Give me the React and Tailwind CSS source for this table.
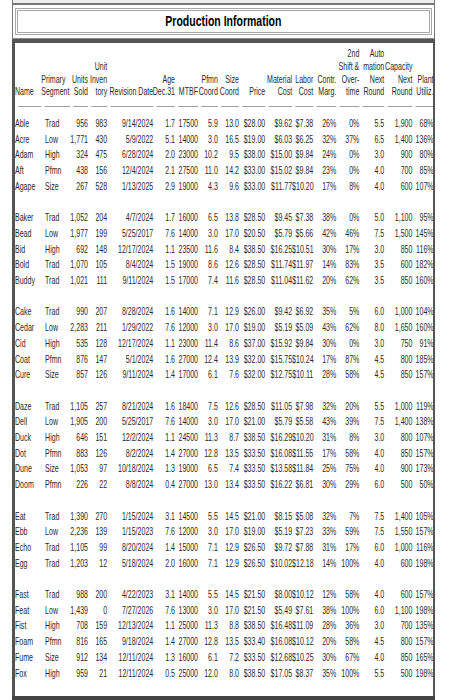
import React from "react";

// widths are in unscaled px; the whole grid is squeezed horizontally like the reference
const cols = [
  { key: "name", w: 41, head: ["Name"], left: true },
  { key: "seg", w: 45, head: ["Primary", "Segment"], left: true },
  { key: "sold", w: 28, head: ["Units", "Sold"] },
  { key: "inv", w: 30, head: ["Unit", "Inven", "tory"] },
  { key: "rev", w: 72, head: ["Revision Date"] },
  { key: "age", w: 34, head: ["Age", "Dec.31"] },
  { key: "mtbf", w: 36, head: ["MTBF"] },
  { key: "pfmn", w: 31, head: ["Pfmn", "Coord"] },
  { key: "size", w: 33, head: ["Size", "Coord"] },
  { key: "price", w: 41, head: ["Price"] },
  { key: "mat", w: 42, head: ["Material", "Cost"] },
  { key: "labor", w: 33, head: ["Labor", "Cost"] },
  { key: "contr", w: 36, head: ["Contr.", "Marg."] },
  { key: "ot", w: 36, head: ["2nd", "Shift &", "Over-", "time"] },
  { key: "auto", w: 39, head: ["Auto", "mation", "Next", "Round"] },
  { key: "cap", w: 44, head: ["Capacity", "Next", "Round"] },
  { key: "plant", w: 33, head: ["Plant", "Utiliz."] },
];

const groups = [
  [
    "Able Trad 956 983 9/14/2024 1.7 17500 5.9 13.0 $28.00 $9.62 $7.38 26% 0% 5.5 1,900 68%",
    "Acre Low 1,771 430 5/9/2022 5.1 14000 3.0 16.5 $19.00 $6.03 $6.25 32% 37% 6.5 1,400 136%",
    "Adam High 324 475 6/28/2024 2.0 23000 10.2 9.5 $38.00 $15.00 $9.84 24% 0% 3.0 900 80%",
    "Aft Pfmn 438 156 12/4/2024 2.1 27500 11.0 14.2 $33.00 $15.02 $9.84 23% 0% 4.0 700 85%",
    "Agape Size 267 528 1/13/2025 2.9 19000 4.3 9.6 $33.00 $11.77 $10.20 17% 8% 4.0 600 107%",
  ],
  [
    "Baker Trad 1,052 204 4/7/2024 1.7 16000 6.5 13.8 $28.50 $9.45 $7.38 38% 0% 5.0 1,100 95%",
    "Bead Low 1,977 199 5/25/2017 7.6 14000 3.0 17.0 $20.50 $5.79 $5.66 42% 46% 7.5 1,500 145%",
    "Bid High 692 148 12/17/2024 1.1 23500 11.6 8.4 $38.50 $16.25 $10.51 30% 17% 3.0 850 116%",
    "Bold Trad 1,070 105 8/4/2024 1.5 19000 8.6 12.6 $28.50 $11.74 $11.97 14% 83% 3.5 600 182%",
    "Buddy Trad 1,021 111 9/11/2024 1.5 17000 7.4 11.6 $28.50 $11.04 $11.62 20% 62% 3.5 850 160%",
  ],
  [
    "Cake Trad 990 207 8/28/2024 1.6 14000 7.1 12.9 $26.00 $9.42 $6.92 35% 5% 6.0 1,000 104%",
    "Cedar Low 2,283 211 1/29/2022 7.6 12000 3.0 17.0 $19.00 $5.19 $5.09 43% 62% 8.0 1,650 160%",
    "Cid High 535 128 12/17/2024 1.1 23000 11.4 8.6 $37.00 $15.92 $9.84 30% 0% 3.0 750 91%",
    "Coat Pfmn 876 147 5/1/2024 1.6 27000 12.4 13.9 $32.00 $15.75 $10.24 17% 87% 4.5 800 185%",
    "Cure Size 857 126 9/11/2024 1.4 17000 6.1 7.6 $32.00 $12.75 $10.11 28% 58% 4.5 850 157%",
  ],
  [
    "Daze Trad 1,105 257 8/21/2024 1.6 18400 7.5 12.6 $28.50 $11.05 $7.98 32% 20% 5.5 1,000 119%",
    "Dell Low 1,905 200 5/25/2017 7.6 14000 3.0 17.0 $21.00 $5.79 $5.58 43% 39% 7.5 1,400 138%",
    "Duck High 646 151 12/2/2024 1.1 24500 11.3 8.7 $38.50 $16.29 $10.20 31% 8% 3.0 800 107%",
    "Dot Pfmn 883 126 8/2/2024 1.4 27000 12.8 13.5 $33.50 $16.08 $11.55 17% 58% 4.0 850 157%",
    "Dune Size 1,053 97 10/18/2024 1.3 19000 6.5 7.4 $33.50 $13.58 $11.84 25% 75% 4.0 900 173%",
    "Doom Pfmn 226 22 8/8/2024 0.4 27000 13.0 13.4 $33.50 $16.22 $6.81 30% 29% 6.0 500 50%",
  ],
  [
    "Eat Trad 1,390 270 1/15/2024 3.1 14500 5.5 14.5 $21.00 $8.15 $5.08 32% 7% 7.5 1,400 105%",
    "Ebb Low 2,236 139 1/15/2023 7.6 12000 3.0 17.0 $19.00 $5.19 $7.23 33% 59% 7.5 1,550 157%",
    "Echo Trad 1,105 99 8/20/2024 1.4 15000 7.1 12.9 $26.50 $9.72 $7.88 31% 17% 6.0 1,000 116%",
    "Egg Trad 1,203 12 5/18/2024 2.0 16000 7.1 12.9 $26.50 $10.02 $12.18 14% 100% 4.0 600 198%",
  ],
  [
    "Fast Trad 988 200 4/22/2023 3.1 14000 5.5 14.5 $21.50 $8.00 $10.12 12% 58% 4.0 600 157%",
    "Feat Low 1,439 0 7/27/2026 7.6 13000 3.0 17.0 $21.50 $5.49 $7.61 38% 100% 6.0 1,100 198%",
    "Fist High 708 159 12/13/2024 1.1 25000 11.3 8.8 $38.50 $16.48 $11.09 28% 36% 3.0 700 135%",
    "Foam Pfmn 816 165 9/18/2024 1.4 27000 12.8 13.5 $33.40 $16.08 $10.12 20% 58% 4.5 800 157%",
    "Fume Size 912 134 12/11/2024 1.3 16000 6.1 7.2 $33.50 $12.68 $10.25 30% 67% 4.0 850 165%",
    "Fox High 959 21 12/11/2024 0.5 25000 12.0 8.0 $38.50 $17.05 $8.37 35% 100% 5.5 500 198%",
  ],
];

const ProductionInfo = () => {
  return (
    <div className="w-[457px] h-[700px] bg-white overflow-hidden font-['Liberation_Sans',Arial,sans-serif]">
      <div className="ml-[12px] w-[423px] h-full flex flex-col">
        {/* bottom edge of the panel above */}
        <div className="h-[5px] border-x border-b-2 border-[#777] bg-[#eeeeee]" />

        <div className="px-[2px] py-[3px] border-x border-[#777]">
          <div className="h-[27px] border-[3px] border-double border-[#a8a8a8] flex items-center justify-center">
            <h1 className="inline-block text-[14px] font-bold text-black scale-x-[0.75]">Production Information</h1>
          </div>
        </div>

        <div className="h-[5px] bg-[#555] border-t border-[#8a8a8a]" />

        <div className="flex-1 border-l-[3px] border-r-2 border-[#555] bg-white pt-[4px] text-[11px] text-[#2a2a2a] overflow-hidden">
          <div className="w-[653px] origin-top-left scale-x-[0.64]">
            <table className="table-fixed border-collapse w-[653px]">
              <colgroup>
                {cols.map((c) => (
                  <col key={c.key} style={{ width: c.w }} />
                ))}
              </colgroup>
              <thead>
                <tr>
                  {cols.map((c) => (
                    <th key={c.key} className="p-0 align-bottom font-normal">
                      <div className={`h-[51px] flex flex-col justify-end leading-[12.7px] whitespace-nowrap ${c.left ? "items-start" : "items-end"}`}>
                        {c.head.map((line) => (
                          <span key={line}>{line}</span>
                        ))}
                      </div>
                    </th>
                  ))}
                </tr>
                <tr>
                  {cols.map((c) => (
                    <th key={c.key} className="p-0 pt-[8px] pb-[9px]">
                      <div className="h-px bg-[#a0a0a0] ml-[5px]" />
                    </th>
                  ))}
                </tr>
              </thead>
              <tbody>
                {groups.map((rows, gi) => (
                  <React.Fragment key={gi}>
                    {gi > 0 && (
                      <tr className="h-[15.7px]">
                        <td colSpan={cols.length} />
                      </tr>
                    )}
                    {rows.map((row) => {
                      const cells = row.split(" ");
                      return (
                        <tr key={cells[0]} className="h-[15.7px]">
                          {cells.map((v, i) => (
                            <td
                              key={i}
                              className={`p-0 leading-[15.7px] whitespace-nowrap ${i === 0 ? "text-left" : i === 1 ? "text-left pl-[6px]" : "text-right"}`}
                            >
                              {v}
                            </td>
                          ))}
                        </tr>
                      );
                    })}
                  </React.Fragment>
                ))}
              </tbody>
            </table>
          </div>
        </div>

        <div className="h-[4px] bg-[#444]" />
      </div>
    </div>
  );
};

export default function App() {
  return <ProductionInfo />;
}
